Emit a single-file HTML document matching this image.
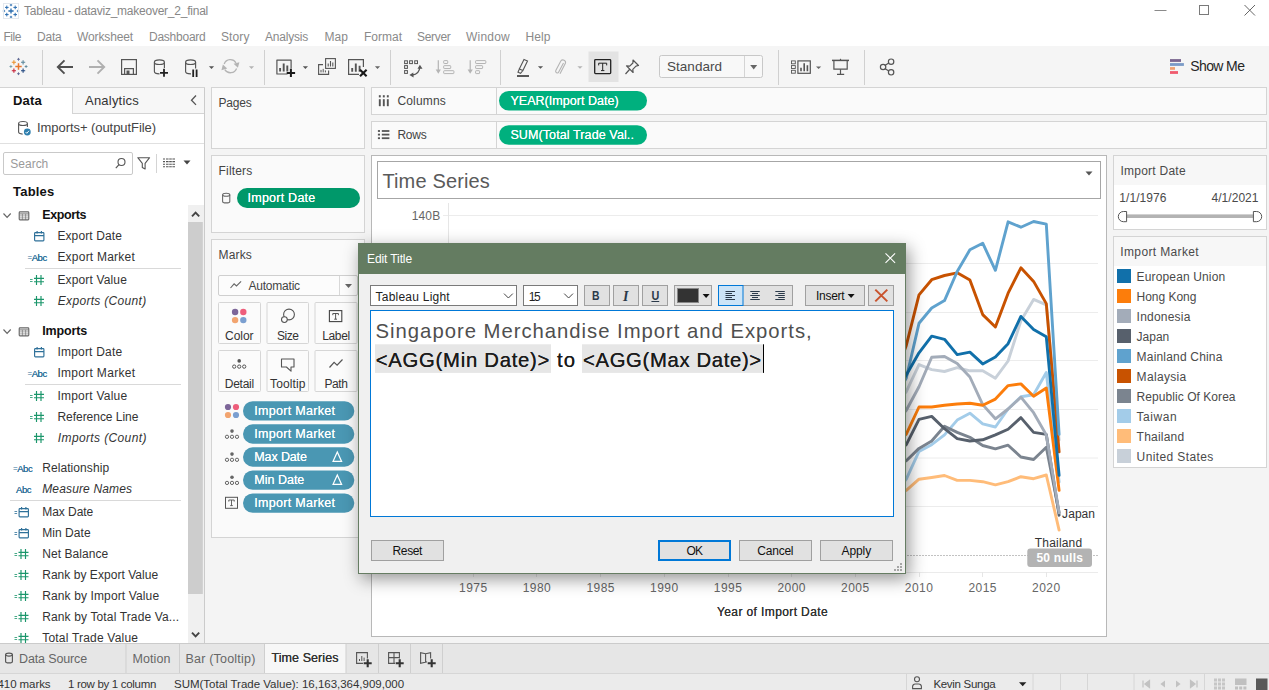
<!DOCTYPE html>
<html><head><meta charset="utf-8"><title>Tableau - dataviz_makeover_2_final</title>
<style>
html,body{margin:0;padding:0;}
body{width:1269px;height:690px;overflow:hidden;background:#fff;font-family:"Liberation Sans",sans-serif;position:relative;}
#root{position:absolute;left:0;top:0;width:1269px;height:690px;overflow:hidden;background:#fff;}
.t{position:absolute;white-space:nowrap;display:block;}
.b{position:absolute;box-sizing:border-box;display:block;overflow:visible;}
</style></head><body><div id="root">

<!-- sec_chrome -->
<div class="b" style="left:0px;top:0px;width:1269px;height:46px;background:#fff;"></div>
<svg class="b" style="left:3px;top:3px;" width="16" height="16" viewBox="0 0 16 16"><path d="M5.4 8 h5.2 M8 5.4 v5.2" stroke="#2a6db0" stroke-width="1.3" fill="none"/><path d="M1.9999999999999998 4.4 h3.6 M3.8 2.6000000000000005 v3.6" stroke="#2a6db0" stroke-width="1.0" fill="none"/><path d="M10.399999999999999 4.4 h3.6 M12.2 2.6000000000000005 v3.6" stroke="#2a6db0" stroke-width="1.0" fill="none"/><path d="M1.9999999999999998 11.6 h3.6 M3.8 9.799999999999999 v3.6" stroke="#2a6db0" stroke-width="1.0" fill="none"/><path d="M10.399999999999999 11.6 h3.6 M12.2 9.799999999999999 v3.6" stroke="#2a6db0" stroke-width="1.0" fill="none"/><path d="M6.8 2 h2.4 M8 0.8 v2.4" stroke="#2a6db0" stroke-width="0.9" fill="none"/><path d="M6.8 14 h2.4 M8 12.8 v2.4" stroke="#2a6db0" stroke-width="0.9" fill="none"/><path d="M-0.19999999999999996 8 h2.4 M1 6.8 v2.4" stroke="#2a6db0" stroke-width="0.9" fill="none"/><path d="M13.8 8 h2.4 M15 6.8 v2.4" stroke="#2a6db0" stroke-width="0.9" fill="none"/><rect x="0.5" y="0.5" width="15" height="15" fill="none" stroke="#e3e8ee" stroke-width="1"/></svg>
<span class="t" style="left:24.00px;top:2.50px;font-size:12px;line-height:17px;color:#878787;letter-spacing:-0.239px;">Tableau - dataviz_makeover_2_final</span>
<svg class="b" style="left:0px;top:0px;" width="1269" height="24" viewBox="0 0 1269 24"><path d="M1154.5 10.5 h12" stroke="#8a8a8a" stroke-width="1"/><rect x="1199.5" y="5.5" width="9" height="9" fill="none" stroke="#7a7a7a" stroke-width="1"/><path d="M1244.5 5 l10.5 10.5 M1255 5 l-10.5 10.5" stroke="#666" stroke-width="1" fill="none"/></svg>
<span class="t" style="left:3.50px;top:28.50px;font-size:12px;line-height:17px;color:#8a8a8a;letter-spacing:-0.459px;">File</span>
<span class="t" style="left:37.00px;top:28.50px;font-size:12px;line-height:17px;color:#8a8a8a;letter-spacing:-0.212px;">Data</span>
<span class="t" style="left:77.00px;top:28.50px;font-size:12px;line-height:17px;color:#8a8a8a;letter-spacing:-0.126px;">Worksheet</span>
<span class="t" style="left:149.00px;top:28.50px;font-size:12px;line-height:17px;color:#8a8a8a;letter-spacing:-0.245px;">Dashboard</span>
<span class="t" style="left:221.00px;top:28.50px;font-size:12px;line-height:17px;color:#8a8a8a;letter-spacing:0.098px;">Story</span>
<span class="t" style="left:265.00px;top:28.50px;font-size:12px;line-height:17px;color:#8a8a8a;letter-spacing:-0.210px;">Analysis</span>
<span class="t" style="left:324.50px;top:28.50px;font-size:12px;line-height:17px;color:#8a8a8a;letter-spacing:0.052px;">Map</span>
<span class="t" style="left:364.00px;top:28.50px;font-size:12px;line-height:17px;color:#8a8a8a;letter-spacing:-0.001px;">Format</span>
<span class="t" style="left:417.00px;top:28.50px;font-size:12px;line-height:17px;color:#8a8a8a;letter-spacing:-0.308px;">Server</span>
<span class="t" style="left:466.00px;top:28.50px;font-size:12px;line-height:17px;color:#8a8a8a;letter-spacing:0.220px;">Window</span>
<span class="t" style="left:525.50px;top:28.50px;font-size:12px;line-height:17px;color:#8a8a8a;letter-spacing:0.080px;">Help</span>
<div class="b" style="left:0px;top:46px;width:1269px;height:41px;background:#f5f5f5;"></div>
<div class="b" style="left:0px;top:87px;width:205px;height:1px;background:#d4d4d4;"></div>
<svg class="b" style="left:0px;top:46px;" width="1269" height="41" viewBox="0 0 1269 41"><path d="M42.5 4 v35" stroke="#d0d0d0" stroke-width="1"/><path d="M264.5 4 v35" stroke="#d0d0d0" stroke-width="1"/><path d="M390.5 4 v35" stroke="#d0d0d0" stroke-width="1"/><path d="M500.5 4 v35" stroke="#d0d0d0" stroke-width="1"/><path d="M778.5 4 v35" stroke="#d0d0d0" stroke-width="1"/><path d="M864.5 4 v35" stroke="#d0d0d0" stroke-width="1"/><path d="M15.3 20.5 h6.4 M18.5 17.3 v6.4" stroke="#e8762d" stroke-width="1.5" fill="none"/><path d="M11.8 16.3 h4.2 M13.9 14.200000000000001 v4.2" stroke="#eb912c" stroke-width="1.1" fill="none"/><path d="M21.0 16.3 h4.2 M23.1 14.200000000000001 v4.2" stroke="#5b879b" stroke-width="1.1" fill="none"/><path d="M11.8 24.7 h4.2 M13.9 22.599999999999998 v4.2" stroke="#c72037" stroke-width="1.1" fill="none"/><path d="M21.0 24.7 h4.2 M23.1 22.599999999999998 v4.2" stroke="#1f457e" stroke-width="1.1" fill="none"/><path d="M17.1 13.3 h2.8 M18.5 11.9 v2.8" stroke="#5c6692" stroke-width="0.9" fill="none"/><path d="M17.1 27.7 h2.8 M18.5 26.3 v2.8" stroke="#5c6692" stroke-width="0.9" fill="none"/><path d="M9.5 20.5 h2.8 M10.9 19.1 v2.8" stroke="#7199a6" stroke-width="0.9" fill="none"/><path d="M24.700000000000003 20.5 h2.8 M26.1 19.1 v2.8" stroke="#59879b" stroke-width="0.9" fill="none"/><path d="M73 21 H58 M64.5 14.3 L57.8 21 l6.7 6.7" fill="none" stroke="#505050" stroke-width="1.9"/><path d="M89 21 H104 M97.5 14.3 L104.2 21 l-6.7 6.7" fill="none" stroke="#b0b0b0" stroke-width="1.9"/><rect x="121.6" y="13.6" width="14.8" height="14.8" fill="none" stroke="#555" stroke-width="1.2"/><path d="M124.6 28 v-5.4 h8.8 V28" fill="none" stroke="#555" stroke-width="1.2"/><rect x="126.5" y="24.5" width="3" height="3.5" fill="#555"/><path d="M154.4 16.2 v9.4 a5 2.3 0 0 0 10 0 v-9.4" fill="none" stroke="#555" stroke-width="1.15"/><ellipse cx="159.4" cy="16.2" rx="5" ry="2.3" fill="none" stroke="#555" stroke-width="1.15"/><rect x="159.5" y="22" width="9" height="9" fill="#f5f5f5"/><path d="M160 26.8 h8 M164 22.8 v8" stroke="#222" stroke-width="1.8"/><path d="M185.6 16.2 v9.4 a5 2.3 0 0 0 10 0 v-9.4" fill="none" stroke="#555" stroke-width="1.15"/><ellipse cx="190.6" cy="16.2" rx="5" ry="2.3" fill="none" stroke="#555" stroke-width="1.15"/><rect x="191" y="22.5" width="8" height="9" fill="#f5f5f5"/><path d="M193.2 23.5 v7.5 M196.6 23.5 v7.5" stroke="#222" stroke-width="1.8"/><path d="M208.9 20.3 h5.2 l-2.6 2.6 z" fill="#555"/><path d="M224.2 17.9 A6.6 6.6 0 0 1 236 16.8" fill="none" stroke="#b4b4b4" stroke-width="1.3"/><path d="M233.6 17.8 L239.4 16.2 L237.9 21.8 Z" fill="#b4b4b4"/><path d="M236.6 22.5 A6.6 6.6 0 0 1 224.8 23.6" fill="none" stroke="#b4b4b4" stroke-width="1.3"/><path d="M227.2 22.6 L221.4 24.2 L222.9 18.6 Z" fill="#b4b4b4"/><path d="M248.9 20.3 h5.2 l-2.6 2.6 z" fill="#b4b4b4"/><path d="M287.5 28 H276.9 V14.1 H291.1 V22.5" fill="none" stroke="#555" stroke-width="1.2" stroke-linejoin="round"/><path d="M280.1 25.6 v-3.6 M283.7 25.6 v-8 M287.3 25.6 v-6" stroke="#555" stroke-width="1.9"/><path d="M286.7 26.9 h8.4 M290.9 22.7 v8.4" stroke="#1a1a1a" stroke-width="2"/><path d="M302.79999999999995 20.3 h5.2 l-2.6 2.6 z" fill="#555"/><rect x="325.6" y="12.6" width="9.8" height="9.8" fill="#f5f5f5" stroke="#555" stroke-width="1.1"/><path d="M328.2 20.6 v-3 M330.5 20.6 v-5.5 M332.8 20.6 v-4" stroke="#555" stroke-width="1.1"/><path d="M323 18.6 H318.6 V28.4 H328.6 V24.6" fill="none" stroke="#555" stroke-width="1.1"/><path d="M321 26.4 v-2.5 M323.2 26.4 v-3.5 M325.4 26.4 v-2" stroke="#555" stroke-width="1"/><path d="M359 28.4 H348.6 V13.6 H363.4 V21" fill="none" stroke="#555" stroke-width="1.2"/><path d="M352.2 25.8 v-3.8 M355.8 25.8 v-8.2 M359.6 25.8 v-6" stroke="#555" stroke-width="1.9"/><path d="M360 23.7 l6.6 6.6 M366.6 23.7 l-6.6 6.6" stroke="#1a1a1a" stroke-width="2.1"/><path d="M374.9 20.3 h5.2 l-2.6 2.6 z" fill="#666"/><rect x="404.6" y="14.8" width="2.8" height="2.8" fill="none" stroke="#555" stroke-width="1"/><rect x="409.6" y="14.8" width="2.8" height="2.8" fill="none" stroke="#555" stroke-width="1"/><rect x="414.7" y="14.8" width="2.8" height="2.8" fill="none" stroke="#555" stroke-width="1"/><rect x="404.6" y="19.6" width="2.8" height="2.8" fill="none" stroke="#555" stroke-width="1"/><rect x="404.6" y="24.6" width="2.8" height="2.8" fill="none" stroke="#555" stroke-width="1"/><path d="M419.8 21 q-0.4 7.2 -7.6 8" fill="none" stroke="#555" stroke-width="1.3"/><path d="M419.9 18.8 l2.6 3.9 h-5 z M409.4 29.1 l3.9 -2.5 l0.3 4.8 z" fill="#555"/><path d="M438.3 14.2 v10.5" fill="none" stroke="#b4b4b4" stroke-width="1.2"/><path d="M435.7 23.6 h5.2 l-2.6 4.2 z" fill="#b4b4b4"/><rect x="443.7" y="14.6" width="4" height="2.9" rx="0.6" fill="none" stroke="#b4b4b4" stroke-width="1"/><rect x="443.7" y="19.65" width="7" height="2.9" rx="0.6" fill="none" stroke="#b4b4b4" stroke-width="1"/><rect x="443.7" y="24.7" width="10.2" height="2.9" rx="0.6" fill="none" stroke="#b4b4b4" stroke-width="1"/><path d="M470.2 14.2 v10.5" fill="none" stroke="#b4b4b4" stroke-width="1.2"/><path d="M467.59999999999997 23.6 h5.2 l-2.6 4.2 z" fill="#b4b4b4"/><rect x="475.59999999999997" y="14.6" width="10.2" height="2.9" rx="0.6" fill="none" stroke="#b4b4b4" stroke-width="1"/><rect x="475.59999999999997" y="19.65" width="7" height="2.9" rx="0.6" fill="none" stroke="#b4b4b4" stroke-width="1"/><rect x="475.59999999999997" y="24.7" width="4" height="2.9" rx="0.6" fill="none" stroke="#b4b4b4" stroke-width="1"/><path d="M524 13.5 l3.5 1.5 l-4.6 9.5 l-3.6 -1.5 z M519.3 23 l-1.3 3.3 l2.6 1 l2.3 -2.8" fill="none" stroke="#555" stroke-width="1.1"/><path d="M517 30 h12" stroke="#333" stroke-width="1.6"/><path d="M537.9 20.2 h5.2 l-2.6 2.6 z" fill="#555"/><path d="M563.5 17 l-4.8 9 a1.6 1.6 0 0 1 -2.9 -1.4 l5 -9.6 a2.6 2.6 0 0 1 4.6 2.3 l-5.4 10.4" fill="none" stroke="#b4b4b4" stroke-width="1.1"/><path d="M577.4 20.2 h5.2 l-2.6 2.6 z" fill="#b4b4b4"/><rect x="588.5" y="5.5" width="30" height="30.5" fill="#e3e3e3"/><rect x="594.7" y="13.6" width="16" height="14" rx="0.8" fill="none" stroke="#222" stroke-width="1.3"/><path d="M598.7 19.4 v-2.2 h8 v2.2 M602.7 17.2 v7.2 M601 24.6 h3.4" fill="none" stroke="#222" stroke-width="1"/><path d="M633 14 l5.5 5.5 l-2.5 0.6 l-3.2 3.2 l0.3 3.2 l-6.6 -6.6 l3.2 0.3 l3.2 -3.2 z M629.5 23.5 l-4 4.5" fill="none" stroke="#555" stroke-width="1.2" stroke-linejoin="round"/><rect x="791.5" y="14.9" width="3.8" height="2.9" fill="none" stroke="#555" stroke-width="0.9"/><rect x="791.5" y="19.6" width="3.8" height="2.9" fill="none" stroke="#555" stroke-width="0.9"/><rect x="791.5" y="24.3" width="3.8" height="2.9" fill="none" stroke="#555" stroke-width="0.9"/><rect x="797.9" y="14.9" width="12.4" height="12.4" fill="none" stroke="#555" stroke-width="1.2"/><path d="M801 25.3 v-3.6 M804.2 25.3 v-8 M807.4 25.3 v-6" stroke="#555" stroke-width="1.6"/><path d="M816.0 20.4 h5.2 l-2.6 2.6 z" fill="#666"/><path d="M832 14.4 h17" stroke="#555" stroke-width="1.5"/><path d="M833.9 15 v8.2 h13.3 v-8.2" fill="none" stroke="#555" stroke-width="1.2"/><path d="M840.5 23.2 v5 M837 28.4 h7.2" stroke="#555" stroke-width="1.2"/><path d="M840.5 12.8 v1.6" stroke="#555" stroke-width="1.2"/><circle cx="883.1" cy="21" r="2.7" fill="none" stroke="#555" stroke-width="1.2"/><circle cx="891.1" cy="15.7" r="2.7" fill="none" stroke="#555" stroke-width="1.2"/><circle cx="891.1" cy="26.3" r="2.7" fill="none" stroke="#555" stroke-width="1.2"/><path d="M884.8 19.6 l4 -2.7 M884.8 22.4 l4 2.7" stroke="#555" stroke-width="1.2"/><rect x="1170" y="13.1" width="11" height="2.8" fill="#7b6690"/><rect x="1170" y="17.1" width="13.9" height="2.8" fill="#7b9bc7"/><rect x="1170" y="21.1" width="5" height="2.7" fill="#f0a070"/><rect x="1170" y="25.1" width="8" height="2.8" fill="#f05a6e"/></svg>
<div class="b" style="left:659px;top:55px;width:104px;height:23px;background:#f8f8f8;border:1px solid #c8c8c8;border-radius:2.5px;"></div>
<div class="b" style="left:744px;top:56px;width:1px;height:21px;background:#d4d4d4;"></div>
<svg class="b" style="left:746px;top:56px;" width="16" height="21" viewBox="0 0 16 21"><path d="M4.2 9 h7 l-3.5 4.4 z" fill="#666"/></svg>
<span class="t" style="left:667.00px;top:56.60px;font-size:13.5px;line-height:19px;color:#4a4a4a;letter-spacing:0.026px;">Standard</span>
<span class="t" style="left:1190.30px;top:56.00px;font-size:14px;line-height:20px;color:#262626;letter-spacing:-0.623px;">Show Me</span>
<!-- sec_left -->
<div class="b" style="left:0px;top:88px;width:204px;height:555px;background:#fff;"></div>
<div class="b" style="left:204px;top:88px;width:1px;height:555px;background:#cbcbcb;"></div>
<div class="b" style="left:72px;top:88px;width:132px;height:26px;background:#f7f7f7;border-left:1px solid #d4d4d4;border-bottom:1px solid #d4d4d4;"></div>
<span class="t" style="left:13.00px;top:91.50px;font-size:13px;line-height:18px;color:#111;letter-spacing:0.206px;font-weight:700;">Data</span>
<span class="t" style="left:85.00px;top:91.50px;font-size:13px;line-height:18px;color:#333;letter-spacing:0.220px;">Analytics</span>
<svg class="b" style="left:0px;top:0px;" width="210" height="645" viewBox="0 0 210 645"><path d="M196 95.5 l-4.5 4.7 l4.5 4.7" fill="none" stroke="#555" stroke-width="1.3"/><path d="M18.6 123.5 v8.6 a4.4 2 0 0 0 4 2" fill="none" stroke="#555" stroke-width="1.1"/><path d="M27.4 123.5 v3.6" fill="none" stroke="#555" stroke-width="1.1"/><ellipse cx="23" cy="123.5" rx="4.4" ry="2" fill="none" stroke="#555" stroke-width="1.1"/><circle cx="27.3" cy="132" r="3.4" fill="#2e7fae"/><path d="M25.6 132 l1.2 1.3 l2.2 -2.5" fill="none" stroke="#fff" stroke-width="0.9"/><path d="M0 143.5 h204" stroke="#e0e0e0" stroke-width="1"/><rect x="3.5" y="152.5" width="129" height="22" rx="1.5" fill="#fff" stroke="#c9c9c9"/><circle cx="121.5" cy="162" r="3.5" fill="none" stroke="#555" stroke-width="1.1"/><path d="M119 164.7 l-3.2 3.4" stroke="#555" stroke-width="1.2"/><path d="M137.8 157.7 h11.8 l-4.5 5.6 v5.6 l-2.8 -1.5 v-4.1 z" fill="none" stroke="#555" stroke-width="1.1" stroke-linejoin="round"/><path d="M156.5 154 v19" stroke="#d4d4d4"/><path d="M163 159.0 h2 M166 159.0 h2.6 M169.2 159.0 h2.6 M172.4 159.0 h2.6" stroke="#555" stroke-width="1.1"/><path d="M163 161.6 h2 M166 161.6 h2.6 M169.2 161.6 h2.6 M172.4 161.6 h2.6" stroke="#555" stroke-width="1.1"/><path d="M163 164.2 h2 M166 164.2 h2.6 M169.2 164.2 h2.6 M172.4 164.2 h2.6" stroke="#555" stroke-width="1.1"/><path d="M163 166.8 h2 M166 166.8 h2.6 M169.2 166.8 h2.6 M172.4 166.8 h2.6" stroke="#555" stroke-width="1.1"/><path d="M183.5 160.5 h7 l-3.5 4 z" fill="#444"/><path d="M3.5 213.5 l3.6 3.8 l3.6 -3.8" fill="none" stroke="#666" stroke-width="1.2"/><rect x="19.200000000000003" y="211.9" width="9.6" height="8" rx="0.8" fill="none" stroke="#666" stroke-width="1.1"/><path d="M19.200000000000003 213.9 h9.6" stroke="#666" stroke-width="0.9"/><path d="M19.200000000000003 215.9 h9.6 M19.200000000000003 217.9 h9.6 M22.400000000000002 213.9 v6 M25.6 213.9 v6" stroke="#666" stroke-width="0.6" fill="none"/><path d="M3.5 329.5 l3.6 3.8 l3.6 -3.8" fill="none" stroke="#666" stroke-width="1.2"/><rect x="19.200000000000003" y="327.90000000000003" width="9.6" height="8" rx="0.8" fill="none" stroke="#666" stroke-width="1.1"/><path d="M19.200000000000003 329.90000000000003 h9.6" stroke="#666" stroke-width="0.9"/><path d="M19.200000000000003 331.90000000000003 h9.6 M19.200000000000003 333.90000000000003 h9.6 M22.400000000000002 329.90000000000003 v6 M25.6 329.90000000000003 v6" stroke="#666" stroke-width="0.6" fill="none"/><rect x="34.6" y="232.6" width="9.3" height="8.2" rx="0.8" fill="none" stroke="#2e7099" stroke-width="1.15"/><path d="M34.6 235.6 h9.3 M37.1 231.0 v2.4 M41.4 231.0 v2.4" stroke="#2e7099" stroke-width="1.15" fill="none"/><path d="M30 279.5 h2.6 M30 281.5 h2.6" stroke="#1b966b" stroke-width="1" fill="none" opacity="0.8"/><path d="M36.5 275.1 v9.8 M41 275.1 v9.8 M34 278.3 h10 M34 281.7 h10" stroke="#1b966b" stroke-width="1.15" fill="none"/><path d="M36.5 296.1 v9.8 M41 296.1 v9.8 M34 299.3 h10 M34 302.7 h10" stroke="#1b966b" stroke-width="1.15" fill="none"/><rect x="34.6" y="348.59999999999997" width="9.3" height="8.2" rx="0.8" fill="none" stroke="#2e7099" stroke-width="1.15"/><path d="M34.6 351.59999999999997 h9.3 M37.1 347.0 v2.4 M41.4 347.0 v2.4" stroke="#2e7099" stroke-width="1.15" fill="none"/><path d="M30 395.5 h2.6 M30 397.5 h2.6" stroke="#1b966b" stroke-width="1" fill="none" opacity="0.8"/><path d="M36.5 391.1 v9.8 M41 391.1 v9.8 M34 394.3 h10 M34 397.7 h10" stroke="#1b966b" stroke-width="1.15" fill="none"/><path d="M30 416.5 h2.6 M30 418.5 h2.6" stroke="#1b966b" stroke-width="1" fill="none" opacity="0.8"/><path d="M36.5 412.1 v9.8 M41 412.1 v9.8 M34 415.3 h10 M34 418.7 h10" stroke="#1b966b" stroke-width="1.15" fill="none"/><path d="M36.5 433.1 v9.8 M41 433.1 v9.8 M34 436.3 h10 M34 439.7 h10" stroke="#1b966b" stroke-width="1.15" fill="none"/><path d="M14.5 511.5 h2.6 M14.5 513.5 h2.6" stroke="#2e7099" stroke-width="1" fill="none" opacity="0.8"/><rect x="19.1" y="508.59999999999997" width="9.3" height="8.2" rx="0.8" fill="none" stroke="#2e7099" stroke-width="1.15"/><path d="M19.1 511.59999999999997 h9.3 M21.6 507.0 v2.4 M25.9 507.0 v2.4" stroke="#2e7099" stroke-width="1.15" fill="none"/><path d="M14.5 532.5 h2.6 M14.5 534.5 h2.6" stroke="#2e7099" stroke-width="1" fill="none" opacity="0.8"/><rect x="19.1" y="529.6" width="9.3" height="8.2" rx="0.8" fill="none" stroke="#2e7099" stroke-width="1.15"/><path d="M19.1 532.6 h9.3 M21.6 528.0 v2.4 M25.9 528.0 v2.4" stroke="#2e7099" stroke-width="1.15" fill="none"/><path d="M14.5 553.5 h2.6 M14.5 555.5 h2.6" stroke="#1b966b" stroke-width="1" fill="none" opacity="0.8"/><path d="M21.0 549.1 v9.8 M25.5 549.1 v9.8 M18.5 552.3 h10 M18.5 555.7 h10" stroke="#1b966b" stroke-width="1.15" fill="none"/><path d="M14.5 574.5 h2.6 M14.5 576.5 h2.6" stroke="#1b966b" stroke-width="1" fill="none" opacity="0.8"/><path d="M21.0 570.1 v9.8 M25.5 570.1 v9.8 M18.5 573.3 h10 M18.5 576.7 h10" stroke="#1b966b" stroke-width="1.15" fill="none"/><path d="M14.5 595.5 h2.6 M14.5 597.5 h2.6" stroke="#1b966b" stroke-width="1" fill="none" opacity="0.8"/><path d="M21.0 591.1 v9.8 M25.5 591.1 v9.8 M18.5 594.3 h10 M18.5 597.7 h10" stroke="#1b966b" stroke-width="1.15" fill="none"/><path d="M14.5 616.5 h2.6 M14.5 618.5 h2.6" stroke="#1b966b" stroke-width="1" fill="none" opacity="0.8"/><path d="M21.0 612.1 v9.8 M25.5 612.1 v9.8 M18.5 615.3 h10 M18.5 618.7 h10" stroke="#1b966b" stroke-width="1.15" fill="none"/><path d="M14.5 637.5 h2.6 M14.5 639.5 h2.6" stroke="#1b966b" stroke-width="1" fill="none" opacity="0.8"/><path d="M21.0 633.1 v9.8 M25.5 633.1 v9.8 M18.5 636.3 h10 M18.5 639.7 h10" stroke="#1b966b" stroke-width="1.15" fill="none"/><path d="M25 268.5 H181" stroke="#d9d9d9" stroke-width="1"/><path d="M25 384.5 H181" stroke="#d9d9d9" stroke-width="1"/><path d="M10 500.5 H181" stroke="#d9d9d9" stroke-width="1"/><rect x="188" y="205" width="16" height="438" fill="#f0f0f0"/><rect x="188" y="222" width="14.8" height="372" fill="#cdcdcd"/><path d="M192 216.4 l3.6 -3.8 l3.6 3.8" fill="none" stroke="#444" stroke-width="1.9"/><path d="M192 632.6 l3.6 3.8 l3.6 -3.8" fill="none" stroke="#444" stroke-width="1.9"/></svg>
<span class="t" style="left:27.50px;top:251.80px;font-size:8px;line-height:11px;color:#2e7099;">=</span>
<span class="t" style="left:31.70px;top:250.70px;font-size:9.5px;line-height:13px;color:#2e7099;letter-spacing:-0.456px;text-shadow:0 0 0.3px #2e7099;">Abc</span>
<span class="t" style="left:27.50px;top:367.80px;font-size:8px;line-height:11px;color:#2e7099;">=</span>
<span class="t" style="left:31.70px;top:366.70px;font-size:9.5px;line-height:13px;color:#2e7099;letter-spacing:-0.456px;text-shadow:0 0 0.3px #2e7099;">Abc</span>
<span class="t" style="left:13.00px;top:462.80px;font-size:8px;line-height:11px;color:#2e7099;">=</span>
<span class="t" style="left:17.20px;top:461.70px;font-size:9.5px;line-height:13px;color:#2e7099;letter-spacing:-0.456px;text-shadow:0 0 0.3px #2e7099;">Abc</span>
<span class="t" style="left:16.00px;top:482.70px;font-size:9.5px;line-height:13px;color:#2e7099;letter-spacing:-0.456px;text-shadow:0 0 0.3px #2e7099;">Abc</span>
<span class="t" style="left:37.00px;top:119.00px;font-size:13px;line-height:18px;color:#444;letter-spacing:-0.062px;">Imports+ (outputFile)</span>
<span class="t" style="left:10.30px;top:155.90px;font-size:12px;line-height:17px;color:#9a9a9a;letter-spacing:-0.004px;">Search</span>
<span class="t" style="left:13.00px;top:182.80px;font-size:13px;line-height:18px;color:#111;letter-spacing:0.214px;font-weight:700;">Tables</span>
<span class="t" style="left:42.20px;top:205.50px;font-size:12.5px;line-height:18px;color:#111;letter-spacing:-0.363px;font-weight:700;">Exports</span>
<span class="t" style="left:42.20px;top:321.50px;font-size:12.5px;line-height:18px;color:#111;letter-spacing:-0.120px;font-weight:700;">Imports</span>
<span class="t" style="left:57.40px;top:227.50px;font-size:12px;line-height:17px;color:#333;letter-spacing:0.112px;">Export Date</span>
<span class="t" style="left:57.40px;top:248.50px;font-size:12px;line-height:17px;color:#333;letter-spacing:0.224px;">Export Market</span>
<span class="t" style="left:57.40px;top:271.50px;font-size:12px;line-height:17px;color:#333;letter-spacing:0.149px;">Export Value</span>
<span class="t" style="left:57.80px;top:292.50px;font-size:12px;line-height:17px;color:#333;letter-spacing:0.311px;font-style:italic;">Exports (Count)</span>
<span class="t" style="left:57.40px;top:343.50px;font-size:12px;line-height:17px;color:#333;letter-spacing:0.210px;">Import Date</span>
<span class="t" style="left:57.40px;top:364.50px;font-size:12px;line-height:17px;color:#333;letter-spacing:0.306px;">Import Market</span>
<span class="t" style="left:57.40px;top:387.50px;font-size:12px;line-height:17px;color:#333;letter-spacing:0.238px;">Import Value</span>
<span class="t" style="left:57.40px;top:408.50px;font-size:12px;line-height:17px;color:#333;letter-spacing:-0.027px;">Reference Line</span>
<span class="t" style="left:57.80px;top:429.50px;font-size:12px;line-height:17px;color:#333;letter-spacing:0.376px;font-style:italic;">Imports (Count)</span>
<span class="t" style="left:42.20px;top:459.50px;font-size:12px;line-height:17px;color:#333;letter-spacing:0.080px;">Relationship</span>
<span class="t" style="left:42.20px;top:480.50px;font-size:12px;line-height:17px;color:#333;letter-spacing:0.151px;font-style:italic;">Measure Names</span>
<span class="t" style="left:42.20px;top:503.50px;font-size:12px;line-height:17px;color:#333;letter-spacing:-0.044px;">Max Date</span>
<span class="t" style="left:42.20px;top:524.50px;font-size:12px;line-height:17px;color:#333;letter-spacing:0.060px;">Min Date</span>
<span class="t" style="left:42.20px;top:545.50px;font-size:12px;line-height:17px;color:#333;letter-spacing:0.057px;">Net Balance</span>
<span class="t" style="left:42.20px;top:566.50px;font-size:12px;line-height:17px;color:#333;letter-spacing:0.041px;">Rank by Export Value</span>
<span class="t" style="left:42.20px;top:587.50px;font-size:12px;line-height:17px;color:#333;letter-spacing:0.125px;">Rank by Import Value</span>
<span class="t" style="left:42.20px;top:608.50px;font-size:12px;line-height:17px;color:#333;letter-spacing:0.135px;">Rank by Total Trade Va...</span>
<span class="t" style="left:42.20px;top:629.50px;font-size:12px;line-height:17px;color:#333;letter-spacing:0.206px;">Total Trade Value</span>
<!-- sec_cards -->
<div class="b" style="left:205px;top:87px;width:1064px;height:556px;background:#f4f4f4;"></div>
<div class="b" style="left:211px;top:87px;width:154px;height:62px;background:#fafafa;border:1px solid #d4d4d4;"></div>
<span class="t" style="left:218.50px;top:95.00px;font-size:12px;line-height:17px;color:#444;letter-spacing:-0.205px;">Pages</span>
<div class="b" style="left:211px;top:155px;width:154px;height:78px;background:#fafafa;border:1px solid #d4d4d4;"></div>
<span class="t" style="left:218.50px;top:163.10px;font-size:12px;line-height:17px;color:#444;letter-spacing:0.191px;">Filters</span>
<div class="b" style="left:211px;top:239px;width:154px;height:299px;background:#fafafa;border:1px solid #d4d4d4;"></div>
<span class="t" style="left:218.50px;top:247.20px;font-size:12px;line-height:17px;color:#444;letter-spacing:0.167px;">Marks</span>
<div class="b" style="left:237px;top:188px;width:123px;height:20px;background:#00986a;border-radius:10px;"></div>
<span class="t" style="left:247.50px;top:189.00px;font-size:12.5px;line-height:18px;color:#fff;letter-spacing:0.245px;text-shadow:0 0 0.4px #fff;">Import Date</span>
<svg class="b" style="left:205px;top:80px;" width="1064" height="470" viewBox="205 80 1064 470"><path d="M222.6 194.8 v6.6 a3.6 1.5 0 0 0 7.2 0 v-6.6" fill="none" stroke="#666" stroke-width="1.05"/><ellipse cx="226.2" cy="194.8" rx="3.6" ry="1.5" fill="none" stroke="#666" stroke-width="1.05"/><rect x="218.5" y="275.5" width="139" height="20" rx="1.5" fill="#fcfcfc" stroke="#cfcfcf"/><path d="M339.5 276 v19" stroke="#d8d8d8"/><path d="M345 284 h7 l-3.5 4 z" fill="#666"/><path d="M230.5 288 l3.6 -4.2 l2.4 2.2 l4.6 -4.6" fill="none" stroke="#666" stroke-width="1.1"/><rect x="218.5" y="302.5" width="42" height="41" rx="1" fill="#fbfbfb" stroke="#d6d6d6"/><rect x="218.5" y="350.5" width="42" height="41" rx="1" fill="#fbfbfb" stroke="#d6d6d6"/><rect x="267" y="302.5" width="41.5" height="41" rx="1" fill="#fbfbfb" stroke="#d6d6d6"/><rect x="267" y="350.5" width="41.5" height="41" rx="1" fill="#fbfbfb" stroke="#d6d6d6"/><rect x="315" y="302.5" width="42" height="41" rx="1" fill="#fbfbfb" stroke="#d6d6d6"/><rect x="315" y="350.5" width="42" height="41" rx="1" fill="#fbfbfb" stroke="#d6d6d6"/><circle cx="235.1" cy="312" r="3.2" fill="#7d6699"/><circle cx="243.3" cy="312" r="3.2" fill="#ee5e7b"/><circle cx="235.1" cy="320.1" r="3.2" fill="#f2a46f"/><circle cx="243.3" cy="320.1" r="3.2" fill="#7b9fd0"/><circle cx="289" cy="314.5" r="5.4" fill="none" stroke="#555" stroke-width="1.1"/><circle cx="284.4" cy="319.6" r="2.9" fill="#fdfdfd" stroke="#555" stroke-width="1.1"/><rect x="329.4" y="310.6" width="12.4" height="11" fill="none" stroke="#444" stroke-width="1.1"/><path d="M332.8 315.2 v-1.7 h5.6 v1.7 M335.6 313.5 v5.6 M334.2 319.2 h2.8" fill="none" stroke="#444" stroke-width="0.9"/><circle cx="239.2" cy="360.9" r="1.8" fill="#555"/><circle cx="234.2" cy="366.59999999999997" r="1.65" fill="none" stroke="#555" stroke-width="1"/><circle cx="239.2" cy="366.59999999999997" r="1.65" fill="none" stroke="#555" stroke-width="1"/><circle cx="244.2" cy="366.59999999999997" r="1.65" fill="none" stroke="#555" stroke-width="1"/><path d="M281.5 359 h12.5 v8 h-3 v4.2 l-4.6 -4.2 h-4.9 z" fill="none" stroke="#555" stroke-width="1.1" stroke-linejoin="round"/><path d="M329.5 367.5 l4.6 -5.2 l3 2.8 l5.4 -5.6" fill="none" stroke="#555" stroke-width="1.2"/><rect x="243" y="401.2" width="111.3" height="19.4" rx="9.7" fill="#4a97b3"/><rect x="243" y="424.3" width="111.3" height="19.4" rx="9.7" fill="#4a97b3"/><rect x="243" y="447.3" width="111.3" height="19.4" rx="9.7" fill="#4a97b3"/><rect x="243" y="470.40000000000003" width="111.3" height="19.4" rx="9.7" fill="#4a97b3"/><rect x="243" y="493.40000000000003" width="111.3" height="19.4" rx="9.7" fill="#4a97b3"/><circle cx="228" cy="407" r="3.1" fill="#7d6699"/><circle cx="236" cy="407" r="3.1" fill="#ee5e7b"/><circle cx="228" cy="415" r="3.1" fill="#f2a46f"/><circle cx="236" cy="415" r="3.1" fill="#7b9fd0"/><circle cx="232" cy="431.09999999999997" r="1.8" fill="#666"/><circle cx="227" cy="436.79999999999995" r="1.65" fill="none" stroke="#666" stroke-width="1"/><circle cx="232" cy="436.79999999999995" r="1.65" fill="none" stroke="#666" stroke-width="1"/><circle cx="237" cy="436.79999999999995" r="1.65" fill="none" stroke="#666" stroke-width="1"/><circle cx="232" cy="454.09999999999997" r="1.8" fill="#666"/><circle cx="227" cy="459.79999999999995" r="1.65" fill="none" stroke="#666" stroke-width="1"/><circle cx="232" cy="459.79999999999995" r="1.65" fill="none" stroke="#666" stroke-width="1"/><circle cx="237" cy="459.79999999999995" r="1.65" fill="none" stroke="#666" stroke-width="1"/><circle cx="232" cy="477.2" r="1.8" fill="#666"/><circle cx="227" cy="482.9" r="1.65" fill="none" stroke="#666" stroke-width="1"/><circle cx="232" cy="482.9" r="1.65" fill="none" stroke="#666" stroke-width="1"/><circle cx="237" cy="482.9" r="1.65" fill="none" stroke="#666" stroke-width="1"/><rect x="225.5" y="497.3" width="12" height="11" fill="none" stroke="#555" stroke-width="1"/><path d="M228.8 501.6 v-1.6 h5.4 v1.6 M231.5 500 v5.6 M230.2 505.6 h2.6" fill="none" stroke="#555" stroke-width="0.9"/><path d="M333 461.40000000000003 l4.3 -9.4 l4.3 9.4 z" fill="none" stroke="#fff" stroke-width="1.2" stroke-linejoin="miter"/><path d="M333 484.40000000000003 l4.3 -9.4 l4.3 9.4 z" fill="none" stroke="#fff" stroke-width="1.2" stroke-linejoin="miter"/><rect x="371.5" y="87.5" width="895" height="27" fill="#fafafa" stroke="#d4d4d4"/><path d="M496.5 87.5 v27" stroke="#d4d4d4"/><rect x="371.5" y="121.5" width="895" height="27" fill="#fafafa" stroke="#d4d4d4"/><path d="M496.5 121.5 v27" stroke="#d4d4d4"/><path d="M379.8 99.2 v7" stroke="#555" stroke-width="1.9"/><rect x="378.85" y="95.2" width="1.9" height="2.2" fill="#555"/><path d="M383.8 99.2 v7" stroke="#555" stroke-width="1.9"/><rect x="382.85" y="95.2" width="1.9" height="2.2" fill="#555"/><path d="M387.8 99.2 v7" stroke="#555" stroke-width="1.9"/><rect x="386.85" y="95.2" width="1.9" height="2.2" fill="#555"/><path d="M381.8 131.0 h7.6" stroke="#555" stroke-width="1.8"/><rect x="377.9" y="130.1" width="2.1" height="1.8" fill="#555"/><path d="M381.8 134.6 h7.6" stroke="#555" stroke-width="1.8"/><rect x="377.9" y="133.7" width="2.1" height="1.8" fill="#555"/><path d="M381.8 138.2 h7.6" stroke="#555" stroke-width="1.8"/><rect x="377.9" y="137.29999999999998" width="2.1" height="1.8" fill="#555"/><rect x="499" y="91" width="148" height="19.6" rx="9.8" fill="#00b07e"/><rect x="499" y="125.2" width="148" height="19.6" rx="9.8" fill="#00b07e"/></svg>
<span class="t" style="left:248.40px;top:278.00px;font-size:12px;line-height:17px;color:#444;letter-spacing:-0.206px;">Automatic</span>
<span class="t" style="left:225.05px;top:327.90px;font-size:12px;line-height:17px;color:#333;letter-spacing:-0.035px;">Color</span>
<span class="t" style="left:277.05px;top:327.90px;font-size:12px;line-height:17px;color:#333;letter-spacing:-0.461px;">Size</span>
<span class="t" style="left:322.25px;top:327.90px;font-size:12px;line-height:17px;color:#333;letter-spacing:-0.372px;">Label</span>
<span class="t" style="left:224.80px;top:375.70px;font-size:12px;line-height:17px;color:#333;letter-spacing:-0.280px;">Detail</span>
<span class="t" style="left:270.05px;top:375.70px;font-size:12px;line-height:17px;color:#333;letter-spacing:0.116px;">Tooltip</span>
<span class="t" style="left:324.50px;top:375.70px;font-size:12px;line-height:17px;color:#333;letter-spacing:-0.421px;">Path</span>
<span class="t" style="left:254.30px;top:401.90px;font-size:12.5px;line-height:18px;color:#fff;letter-spacing:0.300px;text-shadow:0 0 0.4px #fff;">Import Market</span>
<span class="t" style="left:254.30px;top:425.00px;font-size:12.5px;line-height:18px;color:#fff;letter-spacing:0.300px;text-shadow:0 0 0.4px #fff;">Import Market</span>
<span class="t" style="left:254.30px;top:448.00px;font-size:12.5px;line-height:18px;color:#fff;letter-spacing:-0.124px;text-shadow:0 0 0.4px #fff;">Max Date</span>
<span class="t" style="left:254.30px;top:471.10px;font-size:12.5px;line-height:18px;color:#fff;letter-spacing:-0.002px;text-shadow:0 0 0.4px #fff;">Min Date</span>
<span class="t" style="left:254.30px;top:494.10px;font-size:12.5px;line-height:18px;color:#fff;letter-spacing:0.300px;text-shadow:0 0 0.4px #fff;">Import Market</span>
<span class="t" style="left:397.40px;top:92.50px;font-size:12px;line-height:17px;color:#444;letter-spacing:0.165px;">Columns</span>
<span class="t" style="left:397.40px;top:127.00px;font-size:12px;line-height:17px;color:#444;letter-spacing:-0.251px;">Rows</span>
<span class="t" style="left:510.40px;top:91.80px;font-size:12.5px;line-height:18px;color:#fff;letter-spacing:0.037px;text-shadow:0 0 0.4px #fff;">YEAR(Import Date)</span>
<span class="t" style="left:510.40px;top:126.00px;font-size:12.5px;line-height:18px;color:#fff;letter-spacing:0.108px;text-shadow:0 0 0.4px #fff;">SUM(Total Trade Val..</span>
<!-- sec_viz -->
<div class="b" style="left:371px;top:155px;width:736px;height:482px;background:#fff;border:1px solid #b8b8b8;"></div>
<div class="b" style="left:377px;top:161px;width:724px;height:38px;background:#fff;border:1px solid #a6a6a6;"></div>
<span class="t" style="left:382.40px;top:167.00px;font-size:20px;line-height:28px;color:#5a5a5a;letter-spacing:0.150px;">Time Series</span>
<svg class="b" style="left:371px;top:155px;" width="736" height="481" viewBox="371 155 736 481"><path d="M1085.5 171.5 h7 l-3.5 4 z" fill="#555"/><path d="M443 215.5 H1098" stroke="#ececec" stroke-width="1"/><path d="M443 263.5 H1098" stroke="#ececec" stroke-width="1"/><path d="M443 312.5 H1098" stroke="#ececec" stroke-width="1"/><path d="M443 360.5 H1098" stroke="#ececec" stroke-width="1"/><path d="M443 409.5 H1098" stroke="#ececec" stroke-width="1"/><path d="M443 458.0 H1098" stroke="#ececec" stroke-width="1"/><path d="M443 506.5 H1098" stroke="#ececec" stroke-width="1"/><path d="M448.5 203 V572" stroke="#e6e6e6"/><path d="M448 555.5 H1098" stroke="#c2c2c2" stroke-width="1" stroke-dasharray="2 1"/><path d="M448 572.5 H1098" stroke="#ebebeb"/><path d="M473.5 572 v5" stroke="#e6e6e6"/><path d="M536.5 572 v5" stroke="#e6e6e6"/><path d="M600.5 572 v5" stroke="#e6e6e6"/><path d="M664.5 572 v5" stroke="#e6e6e6"/><path d="M728.5 572 v5" stroke="#e6e6e6"/><path d="M791.5 572 v5" stroke="#e6e6e6"/><path d="M855.5 572 v5" stroke="#e6e6e6"/><path d="M919.5 572 v5" stroke="#e6e6e6"/><path d="M982.5 572 v5" stroke="#e6e6e6"/><path d="M1046.5 572 v5" stroke="#e6e6e6"/><polyline points="893.5,405.0 906.3,391.7 919.0,364.6 931.7,369.6 944.5,371.5 957.2,367.6 969.9,370.8 982.7,370.8 995.4,378.2 1008.1,361.0 1020.9,320.8 1033.6,299.4 1046.3,304.8 1059.1,440.0" fill="none" stroke="#c8d0d9" stroke-width="2.9" stroke-linejoin="round" stroke-linecap="round"/><polyline points="893.5,498.0 906.3,490.3 919.0,479.2 931.7,477.5 944.5,475.5 957.2,480.4 969.9,480.4 982.7,481.7 995.4,484.9 1008.1,481.7 1020.9,476.7 1033.6,478.7 1046.3,475.0 1059.1,530.1" fill="none" stroke="#ffbc79" stroke-width="2.9" stroke-linejoin="round" stroke-linecap="round"/><polyline points="893.5,495.0 906.3,479.2 919.0,451.4 931.7,444.7 944.5,434.9 957.2,420.1 969.9,413.2 982.7,423.8 995.4,427.0 1008.1,409.0 1020.9,396.7 1033.6,394.7 1046.3,372.5 1059.1,482.0" fill="none" stroke="#a3cce9" stroke-width="2.9" stroke-linejoin="round" stroke-linecap="round"/><polyline points="893.5,470.0 906.3,460.7 919.0,448.4 931.7,441.0 944.5,426.2 957.2,432.4 969.9,437.3 982.7,445.5 995.4,448.9 1008.1,445.2 1020.9,457.0 1033.6,459.5 1046.3,447.2 1059.1,512.4" fill="none" stroke="#7b848f" stroke-width="2.9" stroke-linejoin="round" stroke-linecap="round"/><polyline points="893.5,380.0 906.3,345.4 919.0,294.9 931.7,279.7 944.5,275.5 957.2,272.8 969.9,280.1 982.7,314.6 995.4,327.0 1008.1,293.2 1020.9,267.8 1033.6,281.4 1046.3,303.6 1059.1,451.8" fill="none" stroke="#c85200" stroke-width="2.9" stroke-linejoin="round" stroke-linecap="round"/><polyline points="893.5,400.0 906.3,378.0 919.0,323.3 931.7,308.0 944.5,300.6 957.2,271.5 969.9,249.8 982.7,243.2 995.4,270.3 1008.1,221.8 1020.9,227.2 1033.6,221.5 1046.3,224.2 1059.1,434.4" fill="none" stroke="#5fa2ce" stroke-width="2.9" stroke-linejoin="round" stroke-linecap="round"/><polyline points="893.5,455.0 906.3,444.7 919.0,419.3 931.7,416.4 944.5,428.7 957.2,438.6 969.9,441.0 982.7,439.8 995.4,434.9 1008.1,429.2 1020.9,417.6 1033.6,432.4 1046.3,434.4 1059.1,515.2" fill="none" stroke="#57606c" stroke-width="2.9" stroke-linejoin="round" stroke-linecap="round"/><polyline points="893.5,425.0 906.3,410.2 919.0,386.8 931.7,357.2 944.5,356.5 957.2,363.4 969.9,377.0 982.7,404.6 995.4,418.8 1008.1,409.0 1020.9,397.2 1033.6,412.7 1046.3,434.9 1059.1,512.8" fill="none" stroke="#a3acb9" stroke-width="2.9" stroke-linejoin="round" stroke-linecap="round"/><polyline points="893.5,445.0 906.3,434.1 919.0,407.0 931.7,407.0 944.5,405.3 957.2,404.0 969.9,403.3 982.7,405.3 995.4,399.1 1008.1,385.6 1020.9,383.9 1033.6,396.2 1046.3,388.0 1059.1,490.4" fill="none" stroke="#fc7d0b" stroke-width="2.9" stroke-linejoin="round" stroke-linecap="round"/><polyline points="893.5,395.0 906.3,375.0 919.0,352.8 931.7,336.1 944.5,339.3 957.2,354.6 969.9,352.1 982.7,363.9 995.4,357.0 1008.1,343.7 1020.9,316.4 1033.6,329.4 1046.3,336.8 1059.1,475.3" fill="none" stroke="#1170aa" stroke-width="2.9" stroke-linejoin="round" stroke-linecap="round"/><rect x="1027.3" y="548.5" width="64.7" height="18.5" rx="3" fill="#b3b3b3"/></svg>
<span class="t" style="left:411.70px;top:208.00px;font-size:12px;line-height:17px;color:#666;letter-spacing:0.169px;">140B</span>
<span class="t" style="left:459.05px;top:579.70px;font-size:12px;line-height:17px;color:#666;letter-spacing:0.452px;">1975</span>
<span class="t" style="left:522.73px;top:579.70px;font-size:12px;line-height:17px;color:#666;letter-spacing:0.452px;">1980</span>
<span class="t" style="left:586.40px;top:579.70px;font-size:12px;line-height:17px;color:#666;letter-spacing:0.452px;">1985</span>
<span class="t" style="left:650.08px;top:579.70px;font-size:12px;line-height:17px;color:#666;letter-spacing:0.452px;">1990</span>
<span class="t" style="left:713.75px;top:579.70px;font-size:12px;line-height:17px;color:#666;letter-spacing:0.452px;">1995</span>
<span class="t" style="left:777.42px;top:579.70px;font-size:12px;line-height:17px;color:#666;letter-spacing:0.452px;">2000</span>
<span class="t" style="left:841.10px;top:579.70px;font-size:12px;line-height:17px;color:#666;letter-spacing:0.452px;">2005</span>
<span class="t" style="left:904.77px;top:579.70px;font-size:12px;line-height:17px;color:#666;letter-spacing:0.452px;">2010</span>
<span class="t" style="left:968.45px;top:579.70px;font-size:12px;line-height:17px;color:#666;letter-spacing:0.452px;">2015</span>
<span class="t" style="left:1032.12px;top:579.70px;font-size:12px;line-height:17px;color:#666;letter-spacing:0.452px;">2020</span>
<span class="t" style="left:717.00px;top:603.80px;font-size:12px;line-height:17px;color:#333;letter-spacing:0.389px;text-shadow:0 0 0.15px #333;">Year of Import Date</span>
<span class="t" style="left:1062.10px;top:505.80px;font-size:12px;line-height:17px;color:#333;letter-spacing:0.061px;">Japan</span>
<span class="t" style="left:1034.80px;top:535.00px;font-size:12px;line-height:17px;color:#333;letter-spacing:0.184px;">Thailand</span>
<span class="t" style="left:1036.40px;top:549.90px;font-size:12px;line-height:17px;color:#fff;letter-spacing:0.265px;font-weight:700;">50 nulls</span>
<!-- sec_right -->
<div class="b" style="left:1113px;top:155px;width:154px;height:75px;background:#fff;border:1px solid #d4d4d4;"></div>
<div class="b" style="left:1114px;top:156px;width:152px;height:29px;background:#f7f7f7;"></div>
<span class="t" style="left:1120.40px;top:163.20px;font-size:12px;line-height:17px;color:#4a4a4a;letter-spacing:0.255px;">Import Date</span>
<span class="t" style="left:1119.30px;top:189.90px;font-size:12px;line-height:17px;color:#4a4a4a;letter-spacing:0.061px;">1/1/1976</span>
<span class="t" style="left:1211.40px;top:189.90px;font-size:12px;line-height:17px;color:#4a4a4a;letter-spacing:0.061px;">4/1/2021</span>
<svg class="b" style="left:1110px;top:205px;" width="159" height="25" viewBox="1110 205 159 25"><rect x="1126" y="214.4" width="128" height="3.6" fill="#b3b3b3"/><path d="M1126.6 211.5 h-3.2 a5.1 5.1 0 0 0 0 10.2 h3.2 z" fill="#fff" stroke="#555" stroke-width="1"/><path d="M1253.4 211.5 h3.2 a5.1 5.1 0 0 1 0 10.2 h-3.2 z" fill="#fff" stroke="#555" stroke-width="1"/></svg>
<div class="b" style="left:1113px;top:236px;width:154px;height:232px;background:#fff;border:1px solid #d4d4d4;"></div>
<div class="b" style="left:1114px;top:237px;width:152px;height:29px;background:#f7f7f7;"></div>
<span class="t" style="left:1120.30px;top:244.10px;font-size:12px;line-height:17px;color:#4a4a4a;letter-spacing:0.360px;">Import Market</span>
<div class="b" style="left:1117px;top:269px;width:14px;height:14px;background:#1170aa;"></div>
<span class="t" style="left:1136.60px;top:269.00px;font-size:12px;line-height:17px;color:#4a4a4a;letter-spacing:0.141px;">European Union</span>
<div class="b" style="left:1117px;top:289px;width:14px;height:14px;background:#fc7d0b;"></div>
<span class="t" style="left:1136.60px;top:289.00px;font-size:12px;line-height:17px;color:#4a4a4a;letter-spacing:-0.038px;">Hong Kong</span>
<div class="b" style="left:1117px;top:309px;width:14px;height:14px;background:#a3acb9;"></div>
<span class="t" style="left:1136.60px;top:309.00px;font-size:12px;line-height:17px;color:#4a4a4a;letter-spacing:0.218px;">Indonesia</span>
<div class="b" style="left:1117px;top:329px;width:14px;height:14px;background:#57606c;"></div>
<span class="t" style="left:1136.60px;top:329.00px;font-size:12px;line-height:17px;color:#4a4a4a;letter-spacing:0.001px;">Japan</span>
<div class="b" style="left:1117px;top:349px;width:14px;height:14px;background:#5fa2ce;"></div>
<span class="t" style="left:1136.60px;top:349.00px;font-size:12px;line-height:17px;color:#4a4a4a;letter-spacing:0.187px;">Mainland China</span>
<div class="b" style="left:1117px;top:369px;width:14px;height:14px;background:#c85200;"></div>
<span class="t" style="left:1136.60px;top:369.00px;font-size:12px;line-height:17px;color:#4a4a4a;letter-spacing:0.331px;">Malaysia</span>
<div class="b" style="left:1117px;top:389px;width:14px;height:14px;background:#7b848f;"></div>
<span class="t" style="left:1136.60px;top:389.00px;font-size:12px;line-height:17px;color:#4a4a4a;letter-spacing:0.056px;">Republic Of Korea</span>
<div class="b" style="left:1117px;top:409px;width:14px;height:14px;background:#a3cce9;"></div>
<span class="t" style="left:1136.60px;top:409.00px;font-size:12px;line-height:17px;color:#4a4a4a;letter-spacing:0.525px;">Taiwan</span>
<div class="b" style="left:1117px;top:429px;width:14px;height:14px;background:#ffbc79;"></div>
<span class="t" style="left:1136.60px;top:429.00px;font-size:12px;line-height:17px;color:#4a4a4a;letter-spacing:0.209px;">Thailand</span>
<div class="b" style="left:1117px;top:449px;width:14px;height:14px;background:#c8d0d9;"></div>
<span class="t" style="left:1136.60px;top:449.00px;font-size:12px;line-height:17px;color:#4a4a4a;letter-spacing:0.381px;">United States</span>
<!-- sec_bottom -->
<div class="b" style="left:0px;top:643px;width:1269px;height:30px;background:#e6e6e6;"></div>
<div class="b" style="left:0px;top:643px;width:1269px;height:1px;background:#cbcbcb;"></div>
<div class="b" style="left:0px;top:673px;width:1269px;height:17px;background:#ebebeb;"></div>
<div class="b" style="left:0px;top:673px;width:1269px;height:1px;background:#d6d6d6;"></div>
<div class="b" style="left:265px;top:644px;width:81px;height:29px;background:#f7f7f7;"></div>
<svg class="b" style="left:0px;top:640px;" width="1269" height="50" viewBox="0 640 1269 50"><path d="M126 644 v29" stroke="#cfcfcf"/><path d="M179.5 644 v29" stroke="#cfcfcf"/><path d="M264.5 644 v29" stroke="#cfcfcf"/><path d="M346 644 v29" stroke="#cfcfcf"/><path d="M378.5 644 v29" stroke="#cfcfcf"/><path d="M410.5 644 v29" stroke="#cfcfcf"/><path d="M442.5 644 v29" stroke="#cfcfcf"/><path d="M5.6 654.6 v6.8 a3.4 1.5 0 0 0 6.8 0 v-6.8" fill="none" stroke="#555" stroke-width="1.15"/><ellipse cx="9" cy="654.6" rx="3.4" ry="1.5" fill="none" stroke="#555" stroke-width="1.15"/><path d="M364 663.4 H356.6 V652.6 H367.4 V659" fill="none" stroke="#555" stroke-width="1.1"/><path d="M359.5 661 v-2 M361.8 661 v-5 M364.1 661 v-3.4" stroke="#555" stroke-width="1"/><path d="M363 663.3 h9.4 M367.7 658.6 v9.4" stroke="#e6e6e6" stroke-width="4"/><path d="M363.7 663.3 h8 M367.7 659.3 v8" stroke="#333" stroke-width="2.1"/><path d="M396 663.4 H388.6 V652.6 H399.4 V659 M388.6 657.6 h10.8 M394 652.6 v10.8" fill="none" stroke="#555" stroke-width="1.1"/><path d="M395 663.3 h9.4 M399.7 658.6 v9.4" stroke="#e6e6e6" stroke-width="4"/><path d="M395.7 663.3 h8 M399.7 659.3 v8" stroke="#333" stroke-width="2.1"/><path d="M427.5 661.8 l-6.9 1.6 V652.6 l5 1.2 l5 -1.2 V659 M425.6 653.8 v8.6" fill="none" stroke="#555" stroke-width="1.1"/><path d="M427 663.3 h9.4 M431.7 658.6 v9.4" stroke="#e6e6e6" stroke-width="4"/><path d="M427.7 663.3 h8 M431.7 659.3 v8" stroke="#333" stroke-width="2.1"/><path d="M906.5 674 v16" stroke="#d6d6d6"/><path d="M1033 674 v16" stroke="#d6d6d6"/><path d="M1060.5 674 v16" stroke="#d6d6d6"/><path d="M1087.5 674 v16" stroke="#d6d6d6"/><path d="M1134 674 v16" stroke="#d6d6d6"/><path d="M1204.5 674 v16" stroke="#d6d6d6"/><circle cx="917" cy="679.3" r="2.5" fill="none" stroke="#555" stroke-width="1.1"/><path d="M912.6 688.6 v-2 a2.6 2.6 0 0 1 2.6 -2.6 h3.6 a2.6 2.6 0 0 1 2.6 2.6 v2 z" fill="none" stroke="#555" stroke-width="1.1"/><path d="M1019 682.2 h7.4 l-3.7 4 z" fill="#222"/><path d="M1143 680.5 v7 M1149.5 680.5 l-4.6 3.5 l4.6 3.5 z" stroke="#c2c2c2" fill="#c2c2c2" stroke-width="1.2"/><path d="M1165 680.5 l-4.6 3.5 l4.6 3.5 z" fill="#c2c2c2"/><path d="M1176 680.5 l4.6 3.5 l-4.6 3.5 z" fill="#c2c2c2"/><path d="M1197 680.5 v7 M1190.5 680.5 l4.6 3.5 l-4.6 3.5 z" stroke="#c2c2c2" fill="#c2c2c2" stroke-width="1.2"/><rect x="1214" y="678.5" width="3" height="3" fill="#c6c6c6"/><rect x="1218" y="678.5" width="3" height="3" fill="#c6c6c6"/><rect x="1222" y="678.5" width="3" height="3" fill="#c6c6c6"/><rect x="1214" y="682.5" width="3" height="3" fill="#c6c6c6"/><rect x="1218" y="682.5" width="3" height="3" fill="#c6c6c6"/><rect x="1222" y="682.5" width="3" height="3" fill="#c6c6c6"/><rect x="1214" y="686.5" width="3" height="3" fill="#c6c6c6"/><rect x="1218" y="686.5" width="3" height="3" fill="#c6c6c6"/><rect x="1222" y="686.5" width="3" height="3" fill="#c6c6c6"/><rect x="1235" y="678.5" width="11.5" height="6.5" fill="#c0c0c0"/><rect x="1235.0" y="686.5" width="3" height="3" fill="#c0c0c0"/><rect x="1239.2" y="686.5" width="3" height="3" fill="#c0c0c0"/><rect x="1243.4" y="686.5" width="3" height="3" fill="#c0c0c0"/><rect x="1256" y="678.5" width="11.5" height="11.5" fill="#595959"/></svg>
<span class="t" style="left:19.00px;top:649.50px;font-size:12.5px;line-height:18px;color:#666;letter-spacing:-0.135px;">Data Source</span>
<span class="t" style="left:132.50px;top:649.50px;font-size:12.5px;line-height:18px;color:#666;letter-spacing:0.080px;">Motion</span>
<span class="t" style="left:185.50px;top:649.50px;font-size:12.5px;line-height:18px;color:#666;letter-spacing:0.201px;">Bar (Tooltip)</span>
<span class="t" style="left:271.50px;top:648.80px;font-size:12.5px;line-height:18px;color:#333;letter-spacing:0.071px;text-shadow:0 0 0.5px #333;">Time Series</span>
<span class="t" style="left:-2.50px;top:676.00px;font-size:11.5px;line-height:16px;color:#333;letter-spacing:-0.076px;">410 marks</span>
<span class="t" style="left:68.00px;top:676.00px;font-size:11.5px;line-height:16px;color:#333;letter-spacing:-0.313px;">1 row by 1 column</span>
<span class="t" style="left:174.00px;top:676.00px;font-size:11.5px;line-height:16px;color:#333;letter-spacing:-0.013px;">SUM(Total Trade Value): 16,163,364,909,000</span>
<span class="t" style="left:933.40px;top:676.00px;font-size:11.5px;line-height:16px;color:#333;letter-spacing:-0.292px;">Kevin Sunga</span>
<!-- sec_dialog -->
<div class="b" style="left:358px;top:243px;width:548px;height:331px;background:#f0f0f0;border:1px solid #667d63;box-shadow:3px 5px 16px 0 rgba(0,0,0,0.42);"></div>
<div class="b" style="left:358px;top:243px;width:548px;height:31px;background:#647c61;"></div>
<span class="t" style="left:367.00px;top:251.00px;font-size:12px;line-height:17px;color:#fff;letter-spacing:-0.102px;">Edit Title</span>
<svg class="b" style="left:358px;top:243px;" width="548" height="331" viewBox="358 243 548 331"><path d="M885.5 253.3 l9.6 9.6 M895.1 253.3 l-9.6 9.6" stroke="#fff" stroke-width="1.1"/><rect x="370.5" y="285.5" width="146" height="20" fill="#fff" stroke="#7a7a7a"/><rect x="523.5" y="285.5" width="54" height="20" fill="#fff" stroke="#7a7a7a"/><path d="M504 293.6 l4.4 4.4 l4.4 -4.4 M564.2 293.6 l4.4 4.4 l4.4 -4.4" fill="none" stroke="#444" stroke-width="1"/><rect x="584.5" y="285.5" width="25" height="20" fill="#e1e1e1" stroke="#a0a0a0"/><rect x="613.5" y="285.5" width="25" height="20" fill="#e1e1e1" stroke="#a0a0a0"/><rect x="642.5" y="285.5" width="25" height="20" fill="#e1e1e1" stroke="#a0a0a0"/><rect x="674.5" y="285.5" width="37" height="20" fill="#e1e1e1" stroke="#a0a0a0"/><rect x="677.5" y="288.5" width="21" height="14" fill="#333" stroke="#888" stroke-width="1"/><path d="M702.6 294 h7 l-3.5 4 z" fill="#111"/><rect x="718.5" y="285.5" width="74" height="20" fill="#e1e1e1" stroke="#a0a0a0"/><rect x="718.5" y="285.5" width="24.5" height="20" fill="#cce4f7" stroke="#0078d7"/><path d="M725.5 291.5 h9.5" stroke="#2b3a4a" stroke-width="1"/><path d="M725.5 293.5 h6.5" stroke="#2b3a4a" stroke-width="1"/><path d="M725.5 295.5 h9.5" stroke="#2b3a4a" stroke-width="1"/><path d="M725.5 297.5 h6.5" stroke="#2b3a4a" stroke-width="1"/><path d="M725.5 299.5 h9.5" stroke="#2b3a4a" stroke-width="1"/><path d="M750.25 291.5 h9.5" stroke="#2b3a4a" stroke-width="1"/><path d="M752.0 293.5 h6" stroke="#2b3a4a" stroke-width="1"/><path d="M750.25 295.5 h9.5" stroke="#2b3a4a" stroke-width="1"/><path d="M752.0 297.5 h6" stroke="#2b3a4a" stroke-width="1"/><path d="M750.25 299.5 h9.5" stroke="#2b3a4a" stroke-width="1"/><path d="M775.3 291.5 h9.5" stroke="#2b3a4a" stroke-width="1"/><path d="M778.3 293.5 h6.5" stroke="#2b3a4a" stroke-width="1"/><path d="M775.3 295.5 h9.5" stroke="#2b3a4a" stroke-width="1"/><path d="M778.3 297.5 h6.5" stroke="#2b3a4a" stroke-width="1"/><path d="M775.3 299.5 h9.5" stroke="#2b3a4a" stroke-width="1"/><rect x="805.5" y="285.5" width="59" height="20" fill="#e1e1e1" stroke="#a0a0a0"/><path d="M847.6 294 h7 l-3.5 4 z" fill="#111"/><rect x="868.5" y="285.5" width="25" height="20" fill="#e1e1e1" stroke="#a0a0a0"/><path d="M875.3 289.6 l12 11.8 M887.3 289.6 l-12 11.8" stroke="#c9532d" stroke-width="2"/><rect x="370.5" y="310.5" width="523" height="206" fill="#fff" stroke="#0078d7"/><rect x="375" y="344.3" width="176" height="28.6" fill="#e6e6e6"/><rect x="582" y="344.3" width="181" height="28.6" fill="#e6e6e6"/><path d="M763.5 344.3 v28.6" stroke="#000" stroke-width="1"/><rect x="371.5" y="540.5" width="72" height="20" fill="#e1e1e1" stroke="#a0a0a0"/><rect x="739.5" y="540.5" width="72" height="20" fill="#e1e1e1" stroke="#a0a0a0"/><rect x="820.5" y="540.5" width="72" height="20" fill="#e1e1e1" stroke="#a0a0a0"/><rect x="659" y="541" width="71" height="19" fill="#e1e1e1" stroke="#0078d7" stroke-width="2"/><rect x="900" y="569" width="2" height="2" fill="#a6a6a6"/><rect x="897" y="569" width="2" height="2" fill="#a6a6a6"/><rect x="894" y="569" width="2" height="2" fill="#a6a6a6"/><rect x="900" y="566" width="2" height="2" fill="#a6a6a6"/><rect x="897" y="566" width="2" height="2" fill="#a6a6a6"/><rect x="900" y="563" width="2" height="2" fill="#a6a6a6"/></svg>
<span class="t" style="left:375.50px;top:288.90px;font-size:12px;line-height:17px;color:#222;letter-spacing:0.232px;">Tableau Light</span>
<span class="t" style="left:528.70px;top:288.50px;font-size:12px;line-height:17px;color:#222;letter-spacing:-1.273px;">15</span>
<span class="t" style="left:591.31px;top:287.30px;font-size:13px;line-height:18px;color:#2b3a4a;font-weight:700;transform:scaleX(0.8);">B</span>
<span class="t" style="left:623.06px;top:286.80px;font-size:14px;line-height:20px;color:#2b3a4a;font-weight:700;font-style:italic;font-family:'Liberation Serif',serif;">I</span>
<span class="t" style="left:650.97px;top:287.60px;font-size:12px;line-height:17px;color:#2b3a4a;font-weight:700;text-decoration:underline;text-underline-offset:0.8px;transform:scaleX(0.9);">U</span>
<span class="t" style="left:815.90px;top:288.10px;font-size:12px;line-height:17px;color:#111;letter-spacing:-0.252px;">Insert</span>
<span class="t" style="left:375.60px;top:316.60px;font-size:20.3px;line-height:28px;color:#4f4f4f;letter-spacing:0.983px;">Singapore Merchandise Import and Exports,</span>
<span class="t" style="left:375.80px;top:345.60px;font-size:20.3px;line-height:28px;color:#1c1c1c;letter-spacing:0.721px;text-shadow:0 0 0.6px #1c1c1c;">&lt;AGG(Min Date)&gt;</span>
<span class="t" style="left:557.00px;top:345.60px;font-size:20.3px;line-height:28px;color:#1c1c1c;letter-spacing:1.034px;text-shadow:0 0 0.6px #1c1c1c;">to</span>
<span class="t" style="left:583.00px;top:345.60px;font-size:20.3px;line-height:28px;color:#1c1c1c;letter-spacing:0.652px;text-shadow:0 0 0.6px #1c1c1c;">&lt;AGG(Max Date)&gt;</span>
<span class="t" style="left:392.55px;top:542.90px;font-size:12px;line-height:17px;color:#111;letter-spacing:-0.369px;">Reset</span>
<span class="t" style="left:686.55px;top:542.90px;font-size:12px;line-height:17px;color:#111;letter-spacing:-0.920px;">OK</span>
<span class="t" style="left:757.30px;top:542.90px;font-size:12px;line-height:17px;color:#111;letter-spacing:-0.225px;">Cancel</span>
<span class="t" style="left:841.55px;top:542.90px;font-size:12px;line-height:17px;color:#111;letter-spacing:-0.103px;">Apply</span>
</div></body></html>
